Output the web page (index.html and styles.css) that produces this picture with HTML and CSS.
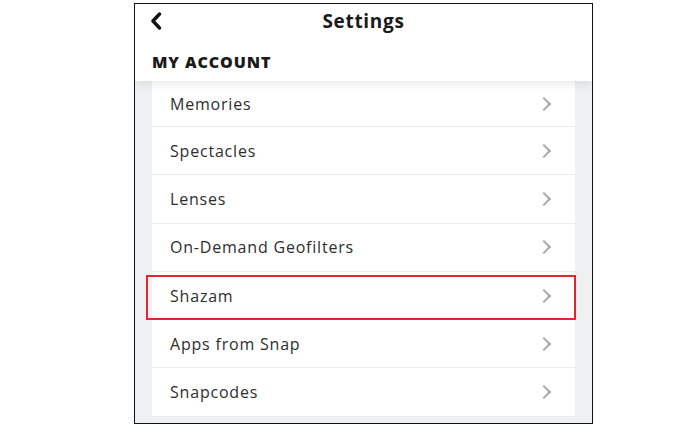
FILE: index.html
```html
<!DOCTYPE html>
<html lang="en">
<head>
  <meta charset="UTF-8">
  <title>Settings</title>
  <link rel="stylesheet" href="styles.css">
</head>
<body>

<!-- phone screen -->
<div class="pantalla">
  <div class="cabecera">
    <div class="barra">
      <svg class="atras" width="12" height="18" viewBox="0 0 12 18">
        <polyline points="9.5,2 3,9 9.5,16" fill="none" stroke="#111" stroke-width="3.4" stroke-linecap="round" stroke-linejoin="round"/>
      </svg>
      <h1>Settings</h1>
    </div>
    <h2>MY ACCOUNT</h2>
  </div>

  <div class="fondo">
    <ul class="lista">
      <li class="fila primera">Memories <span class="flecha"></span></li>
      <li class="fila">Spectacles <span class="flecha"></span></li>
      <li class="fila">Lenses <span class="flecha"></span></li>
      <li class="fila">On-Demand Geofilters <span class="flecha"></span></li>
      <li class="fila marcada">Shazam <span class="flecha"></span></li>
      <li class="fila">Apps from Snap <span class="flecha"></span></li>
      <li class="fila">Snapcodes <span class="flecha"></span></li>
    </ul>
  </div>
</div>

</body>
</html>
```

FILE: styles.css
```css
body { margin: 0; background: #fff; font-family: "Open Sans", sans-serif; }

.pantalla {
  box-sizing: border-box;
  width: 459px;
  height: 421px;
  margin: 3px 0 0 134px;
  border: 1px solid #111;
  overflow: hidden;
  display: flex;
  flex-direction: column;
}

.cabecera {
  height: 77px;
  background: #fff;
  position: relative;
  z-index: 2;
  box-shadow: 0 3px 9px rgba(0, 0, 0, 0.09);
}
.barra {
  height: 34px;
  display: flex;
  align-items: center;
  justify-content: center;
  position: relative;
}
.atras { position: absolute; left: 15px; top: 8px; }
h1 {
  margin: 0;
  font-size: 19px;
  font-weight: 700;
  color: #1a1a1a;
  letter-spacing: 0.7px;
}
h2 {
  margin: 13px 0 0 17px;
  font-size: 16px;
  font-weight: 800;
  color: #1a1a1a;
  letter-spacing: 0.9px;
}

.fondo {
  flex: 1;
  background: #eff0f2;
  padding: 0 17px;
}
.lista {
  list-style: none;
  margin: 0;
  padding: 0;
  background: #fff;
}
.fila {
  position: relative;
  box-sizing: border-box;
  height: 48.3px;
  padding: 0 23px 0 18px;
  border-bottom: 1px solid #ececee;
  display: flex;
  align-items: center;
  justify-content: space-between;
  font-size: 16px;
  letter-spacing: 0.8px;
  color: #2e2e2e;
}
.fila.primera { height: 46px; }
.flecha {
  width: 8px;
  height: 8px;
  border-top: 2.2px solid #a9a9ab;
  border-right: 2.2px solid #a9a9ab;
  transform: rotate(45deg);
  margin-right: 3px;
}
.fila.marcada::after {
  content: "";
  position: absolute;
  left: -6px;
  right: -1px;
  top: 3px;
  bottom: -1px;
  border: 2.5px solid #e0272e;
}
```
